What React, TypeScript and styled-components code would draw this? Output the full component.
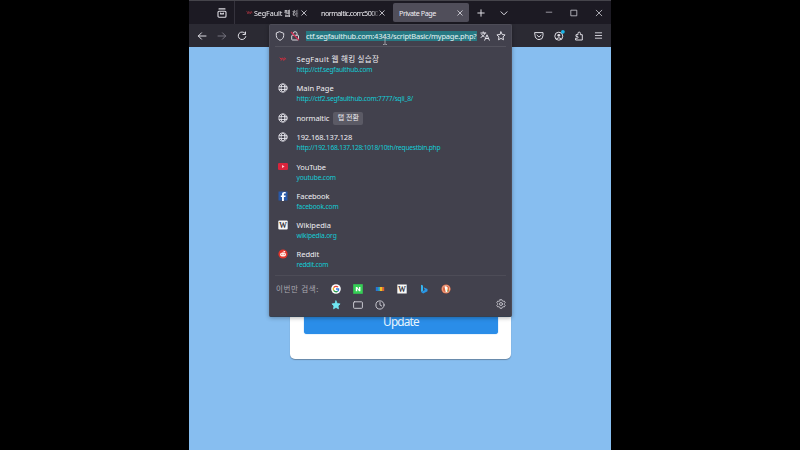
import React from "react";
import styled, { createGlobalStyle } from "styled-components";

const Global = createGlobalStyle`
  * { box-sizing: border-box; }
  html, body { margin: 0; background: #000; overflow: hidden; }
  body { font-family: "Noto Sans", "Noto Sans CJK KR", sans-serif; font-size: 7.2px; color: #f0eff4; }
  svg { display: block; flex: none; }
`;

const Screen = styled.div`
  width: 800px;
  height: 450px;
  display: flex;
  justify-content: center;
  background: #000;
`;

const BrowserWindow = styled.main`
  position: relative;
  width: 422px;
  height: 450px;
  display: flex;
  flex-direction: column;
  background: #87bef0;
`;

const TabBar = styled.header`
  height: 24px;
  flex: none;
  display: flex;
  align-items: center;
  background: #1c1a23;
  border-top: 1px solid #45444b;
`;

const ViewButton = styled.div`
  width: 46px;
  height: 23px;
  padding-left: 28px;
  margin-right: 4px;
  display: flex;
  align-items: center;
  border-right: 1px solid #35333d;
`;

const Tab = styled.div<{ $width: number; $active?: boolean }>`
  width: ${(p) => p.$width}px;
  height: 19px;
  padding: 0 ${(p) => (p.$active ? 5 : 7)}px 0 6px;
  display: flex;
  align-items: center;
  border-radius: 2px;
  background: ${(p) => (p.$active ? "#504e5a" : "transparent")};
`;

const TabLabel = styled.span<{ $fade?: boolean; $track?: number }>`
  margin-right: auto;
  white-space: nowrap;
  line-height: 12px;
  letter-spacing: ${(p) => p.$track ?? 0}px;
  mask-image: ${(p) => (p.$fade ? "linear-gradient(90deg, #000 88%, rgba(0, 0, 0, 0.2))" : "none")};
`;

const TabActions = styled.div`
  display: flex;
  align-items: center;
  gap: 13px;
  margin-left: 7px;
`;

const WindowControls = styled.div`
  display: flex;
  align-items: center;
  gap: 17px;
  margin-left: auto;
  padding-right: 8px;
`;

const Toolbar = styled.nav`
  height: 23px;
  flex: none;
  display: flex;
  align-items: center;
  justify-content: space-between;
  padding: 0 8px;
  background: #2b2a33;
`;

const ToolGroup = styled.div<{ $gap: number }>`
  display: flex;
  align-items: center;
  gap: ${(p) => p.$gap}px;
`;

const Content = styled.section`
  flex: 1;
  display: flex;
  justify-content: center;
  align-items: flex-start;
  padding-left: 1px;
`;

const Card = styled.div`
  width: 221px;
  height: 312px;
  display: flex;
  flex-direction: column;
  justify-content: flex-end;
  padding: 0 13px 25px 14px;
  background: #fff;
  border-radius: 5px;
  box-shadow: 0 1px 1px #6686a5;
`;

const UpdateButton = styled.button`
  height: 26px;
  padding: 0;
  border: 0;
  border-radius: 3px;
  background: #2a8de8;
  color: #e9f6ff;
  font: 11.8px/25px "Noto Sans", sans-serif;
  letter-spacing: -0.8px;
  box-shadow: 0 0 1px #2a8de8;
`;

const Popup = styled.section`
  position: absolute;
  left: 80px;
  top: 24px;
  width: 243px;
  height: 293px;
  display: flex;
  flex-direction: column;
  background: #42414d;
  border: 1px solid #4c4b56;
  border-bottom-color: #37404f;
  border-radius: 2px;
  box-shadow: 0 1px 4px rgba(0, 0, 0, 0.3);
`;

const AddressBar = styled.div`
  height: 22px;
  flex: none;
  display: flex;
  align-items: center;
  margin: 0 5px;
  border-bottom: 1px solid #53525d;
`;

const Selection = styled.div`
  width: 172px;
  height: 10px;
  margin: 1px 3px 0 5px;
  white-space: nowrap;
  background: #277983;
  color: #e4f3f4;
  font-size: 7.5px;
  line-height: 10px;
  letter-spacing: -0.21px;
`;

const Results = styled.ul`
  list-style: none;
  margin: 0;
  padding: 3px 0 0 8px;
  flex: 1;
`;

const Result = styled.li<{ $single?: boolean }>`
  height: ${(p) => (p.$single ? 19.8 : 29.25)}px;
  display: flex;
  align-items: flex-start;
  padding-top: ${(p) => (p.$single ? 4.5 : 4)}px;
`;

const ResultIcon = styled.div`
  width: 10px;
  height: 10px;
  margin-right: 8.5px;
  display: flex;
  align-items: center;
  justify-content: center;
`;

const Title = styled.div<{ $track?: number }>`
  font-size: 7.5px;
  line-height: 11px;
  color: #f0eff3;
  white-space: nowrap;
  letter-spacing: ${(p) => p.$track ?? 0}px;
`;

const Address = styled.div<{ $track?: number }>`
  font-size: 6.7px;
  line-height: 10px;
  color: #12ccd6;
  white-space: nowrap;
  letter-spacing: ${(p) => p.$track ?? -0.18}px;
`;

const SwitchBadge = styled.span`
  width: 30px;
  height: 13px;
  margin: -1px 0 0 4px;
  border-radius: 2px;
  background: #5b5a65;
  font-size: 7px;
  line-height: 12px;
  text-align: center;
`;

const SearchFooter = styled.footer`
  height: 41px;
  flex: none;
  display: flex;
  margin: 0 5px;
  padding: 5px 0 0 1px;
  border-top: 1px solid #4d4c57;
`;

const FooterLabel = styled.span`
  width: 49px;
  color: #aaa9b2;
  font-size: 7.5px;
  line-height: 16px;
  letter-spacing: 0.65px;
  white-space: nowrap;
`;

const EngineGrid = styled.div`
  display: grid;
  grid-template-columns: repeat(6, 22px);
  grid-template-rows: 16px 15px;
  place-items: center;
`;

const SettingsSlot = styled.div`
  margin: 18px 0 0 auto;
`;

const Cursor = styled.div`
  position: absolute;
  left: 193px;
  top: 37px;
`;

type GlyphProps = { size?: number; color?: string; weight?: number; children: React.ReactNode };
const Glyph = ({ size = 10, color = "#dedde4", weight = 1, children }: GlyphProps) => (
  <svg width={size} height={size} viewBox="0 0 10 10" fill="none" stroke={color} strokeWidth={weight} strokeLinecap="round" strokeLinejoin="round">
    {children}
  </svg>
);

const Close = () => (
  <Glyph size={8}><path d="M2.2 2.2l5.6 5.6M7.8 2.2L2.2 7.8" /></Glyph>
);

const Globe = () => (
  <Glyph color="#e8e7ee" weight={0.85}>
    <circle cx="5" cy="5" r="4.1" /><ellipse cx="5" cy="5" rx="1.9" ry="4.1" /><path d="M1.2 3.6h7.6M1.2 6.5h7.6" />
  </Glyph>
);

const SegFault = ({ color = "#a9333f", size = 10 }: { color?: string; size?: number }) => (
  <Glyph color={color} weight={1} size={size}><path d="M2 4l1.2 1L4.5 4l.9 1.2L6.6 4l1.2 1M3 6l1-.4M5.5 6.1l1-.4" /></Glyph>
);

const YouTube = () => (
  <Glyph color="none"><rect y="1" width="10" height="7" rx="1.2" fill="#d9243c" /><path d="M4 3l2.6 1.5L4 6z" fill="#ffc6ca" /></Glyph>
);

const Facebook = () => (
  <Glyph color="none"><rect x=".5" y=".5" width="9" height="9" fill="#2859a8" /><path d="M4 10V6H2.8V4.4H4V3.3C4 1.6 5 .9 6.5.9h1.2v1.6h-.9c-.8 0-.9.3-.9 1v.9h1.8L7.4 6H5.9v4z" fill="#fff" /></Glyph>
);

const Wikipedia = ({ round = 1 }: { round?: number }) => (
  <Glyph color="none"><rect x=".3" y=".5" width="9.4" height="9" rx={round} fill="#f7f7f7" /><text x="5" y="7.8" textAnchor="middle" fontFamily="Liberation Serif, serif" fontSize="8" fill="#202026" stroke="#202026" strokeWidth=".2">W</text></Glyph>
);

const Reddit = () => (
  <Glyph color="none"><circle cx="5" cy="5" r="4.6" fill="#e4352b" /><ellipse cx="5" cy="5.5" rx="3" ry="2.1" fill="#fff0e8" /><circle cx="6.6" cy="2.7" r=".7" fill="#fff" /><path d="M5 3.5l.5-1.4 1 .4" stroke="#fff" strokeWidth=".5" /><circle cx="3.8" cy="5.2" r=".55" fill="#e4352b" /><circle cx="6.2" cy="5.2" r=".55" fill="#e4352b" /></Glyph>
);

const Google = () => (
  <Glyph color="none">
    <circle cx="5" cy="5" r="4.8" fill="#fff" />
    <g strokeWidth="1.3" strokeLinecap="butt"><path d="M7 3.1A2.75 2.75 0 0 0 2.7 3.6" stroke="#e54335" /><path d="M2.7 3.6a2.75 2.75 0 0 0 0 2.8" stroke="#f4b514" /><path d="M2.7 6.4a2.75 2.75 0 0 0 4 .8" stroke="#2d9d50" /><path d="M6.7 7.2A2.75 2.75 0 0 0 7.7 5H5" stroke="#3479df" /></g>
  </Glyph>
);

const Naver = () => (
  <Glyph color="none"><rect x=".2" y=".2" width="9.6" height="9.6" fill="#35cf55" /><path d="M2.8 7.2V2.9h1.4L6 5.4V2.9h1.4v4.3H6L4.2 4.8v2.4z" fill="#fff" /></Glyph>
);

const Daum = () => (
  <Glyph color="none"><rect x=".8" y="3" width="3" height="4" fill="#2774d9" /><rect x="3.3" y="3" width="1.7" height="4" fill="#2fb0b0" /><rect x="5" y="3" width="2.7" height="4" fill="#f4be26" /><rect x="7.5" y="3" width="1.7" height="4" fill="#e65c35" /></Glyph>
);

const Bing = () => (
  <Glyph color="none"><path d="M2 .8l2 .8v5.1L2 8z" fill="#36b5ef" /><path d="M4.5 3.3l4 1.7v2.2L4.2 9.5 2 8l3.8-2z" fill="#2997e8" /></Glyph>
);

const Duck = () => (
  <Glyph color="none"><circle cx="5" cy="5" r="4.6" fill="#dc6740" /><circle cx="5" cy="5" r="3.7" stroke="#f4d8cc" strokeWidth=".5" /><path d="M3.5 2.4c2-.8 3.3.3 3.2 2L6.5 8H4.7z" fill="#fff" /><path d="M5.6 4.7l2 .2-1.7.9z" fill="#f3bd28" /><path d="M5.7 6.8l1.5-.6v1.7z" fill="#4ca84c" /></Glyph>
);

const starPath = "M5 .9l1.2 2.6 2.9.4L7 5.9l.5 2.9L5 7.4 2.5 8.8 3 5.9.9 3.9l2.9-.4z";

const Gear = () => (
  <Glyph color="#c8c7cf" weight={0.9}><path d="M4.1.7h1.8l.4 1.2.8.4 1.2-.2.9 1.5-.8.9v1l.8.9-.9 1.5-1.2-.2-.8.4-.4 1.2H4.1l-.4-1.2-.8-.4-1.2.2-.9-1.5.8-.9v-1l-.8-.9.9-1.5 1.2.2.8-.4z" /><circle cx="5" cy="5" r="1.5" /></Glyph>
);

const Translate = () => (
  <Glyph color="#e4e3ea"><path d="M.8 2h5M3.2.8V2M5 2C4.5 4 3 5.5 1 6.3M1.8 3.4C2.5 4.8 3.2 5.4 4.2 5.8M4.7 9.2L7 3.8l2.3 5.4M5.5 7.5h3" /></Glyph>
);

const InsecureLock = () => (
  <svg width="16" height="10" viewBox="0 0 16 10">
    <g fill="none" stroke="#d9d8df"><path d="M8.2 4.2V2.6a1.9 1.9 0 0 1 3.8 0v1.6" /><rect x="6.7" y="4.3" width="6.8" height="4.7" rx=".7" /></g>
    <path d="M6 1l7.8 8" stroke="#d52b50" strokeWidth="1.2" />
  </svg>
);

const Account = () => (
  <svg width="10" height="10" viewBox="0 0 10 10" overflow="visible">
    <g fill="none" stroke="#dedde4"><circle cx="4.8" cy="5.2" r="4" /><path d="M2.2 7.9Q5 5.5 7.5 7.9" /></g>
    <circle cx="4.8" cy="4.3" r="1.4" fill="#dedde4" /><circle cx="8.9" cy=".8" r="1.9" fill="#19b7eb" />
  </svg>
);

type Entry = { title: string; address?: string; icon: React.ReactNode; track?: number; urlTrack?: number };
const entries: Entry[] = [
  { title: "SegFault 웹 해킹 실습장", address: "http://ctf.segfaulthub.com", icon: <SegFault color="#d92d3d" />, track: 0.3, urlTrack: -0.26 },
  { title: "Main Page", address: "http://ctf2.segfaulthub.com:7777/sqli_8/", icon: <Globe />, urlTrack: -0.24 },
  { title: "normaltic", icon: <Globe />, track: -0.1 },
  { title: "192.168.137.128", address: "http://192.168.137.128:1018/10th/requestbin.php", icon: <Globe />, track: -0.12, urlTrack: -0.25 },
  { title: "YouTube", address: "youtube.com", icon: <YouTube />, track: -0.12 },
  { title: "Facebook", address: "facebook.com", icon: <Facebook />, track: -0.1 },
  { title: "Wikipedia", address: "wikipedia.org", icon: <Wikipedia /> },
  { title: "Reddit", address: "reddit.com", icon: <Reddit />, urlTrack: -0.22 },
];

export default function App() {
  return (
    <Screen>
      <Global />
      <BrowserWindow>
        <TabBar>
          <ViewButton><Glyph weight={1.1}><rect x="1" y="3.2" width="8" height="6" rx="1" /><path d="M2 .9h6M3.6 5.1v.8h2.8v-.8" /></Glyph></ViewButton>
          <Tab $width={76}>
            <SegFault size={9} />
            <TabLabel $fade $track={-0.1}>SegFault 웹 해</TabLabel><Close />
          </Tab>
          <Tab $width={78}><TabLabel $fade $track={-0.54}>normaltic.com:5000</TabLabel><Close /></Tab>
          <Tab $width={76} $active><TabLabel $track={-0.45}>Private Page</TabLabel><Close /></Tab>
          <TabActions>
            <Glyph><path d="M5 1.8v6.4M1.8 5h6.4" /></Glyph>
            <Glyph><path d="M2 3.8l3 3 3-3" /></Glyph>
          </TabActions>
          <WindowControls>
            <Glyph size={8} weight={0.8}><path d="M1.5 4h7" /></Glyph>
            <Glyph size={8} weight={0.9}><rect x="1.5" y="1.5" width="7" height="7" /></Glyph>
            <Glyph size={8} weight={0.9}><path d="M1.5 1.5l7 7M8.5 1.5l-7 7" /></Glyph>
          </WindowControls>
        </TabBar>
        <Toolbar>
          <ToolGroup $gap={10}>
            <Glyph><path d="M9 5H1.3M4.5 1.8L1.3 5l3.2 3.2" /></Glyph>
            <Glyph color="#75737e"><path d="M1 5h7.7M5.5 1.8L8.7 5 5.5 8.2" /></Glyph>
            <Glyph><path d="M8 2.3A3.8 3.8 0 1 0 8.8 5.6M8.5 1v2.5H6" /></Glyph>
          </ToolGroup>
          <ToolGroup $gap={10}>
            <Glyph><path d="M1 1.6h8v3a4 4 0 0 1-8 0zM3 4.2l2 1.9 2-1.9" /></Glyph>
            <Account />
            <Glyph><path d="M2 9h6.3V3.7H6.4V2.3a1.2 1.2 0 0 0-2.4 0v1.4H2v1.7h1.2a.9.9 0 0 1 0 1.8H2z" /></Glyph>
            <Glyph size={9}><path d="M1.5 2h7M1.5 5h7M1.5 8h7" /></Glyph>
          </ToolGroup>
        </Toolbar>
        <Content><Card><UpdateButton>Update</UpdateButton></Card></Content>
        <Popup>
          <AddressBar>
            <Glyph><path d="M5 .8l3.7 1.5v2.2C8.7 7 7 8.5 5 9.3 3 8.5 1.3 7 1.3 4.5V2.3z" /></Glyph>
            <InsecureLock />
            <Selection>ctf.segfaulthub.com:4343/scriptBasic/mypage.php?</Selection>
            <ToolGroup $gap={6}><Translate /><Glyph><path d={starPath} /></Glyph></ToolGroup>
          </AddressBar>
          <Results>
            {entries.map((entry) => (
              <Result key={entry.title} $single={!entry.address}>
                <ResultIcon>{entry.icon}</ResultIcon>
                <div>
                  <Title $track={entry.track}>{entry.title}</Title>
                  {entry.address && <Address $track={entry.urlTrack}>{entry.address}</Address>}
                </div>
                {!entry.address && <SwitchBadge>탭 전환</SwitchBadge>}
              </Result>
            ))}
          </Results>
          <SearchFooter>
            <FooterLabel>이번만 검색:</FooterLabel>
            <EngineGrid>
              <Google /><Naver /><Daum /><Wikipedia round={0} /><Bing /><Duck />
              <Glyph color="#70e6f2" weight={0.8}><path d={starPath} fill="#70e6f2" /></Glyph>
              <Glyph color="#c8c7cf"><rect x=".6" y="1.8" width="8.8" height="6.5" rx=".8" /></Glyph>
              <Glyph color="#c8c7cf"><circle cx="5" cy="5" r="4.1" /><path d="M5 2.5V5l1.7 1" /></Glyph>
            </EngineGrid>
            <SettingsSlot><Gear /></SettingsSlot>
          </SearchFooter>
        </Popup>
        <Cursor><svg width="6" height="8" viewBox="0 0 6 8"><path d="M1 .5h1.2l.8.6.8-.6H5M3 1v5.8M1 7.5h1.2l.8-.6.8.6H5" fill="none" stroke="#b8b7bd" strokeWidth=".8" /></svg></Cursor>
      </BrowserWindow>
    </Screen>
  );
}
